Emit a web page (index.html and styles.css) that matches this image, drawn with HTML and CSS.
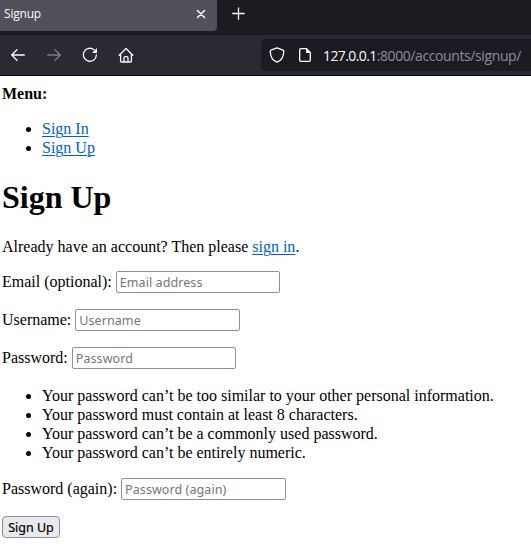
FILE: index.html
```html
<!DOCTYPE html>
<html lang="en">
<head>
<meta charset="utf-8">
<title>Signup</title>
<link rel="stylesheet" href="styles.css">
</head>
<body>
<header class="browser">
  <div class="tabs">
    <div class="tab">
      <span class="tab-title">Signup</span>
      <svg class="close" width="10" height="10" viewBox="0 0 10 10"><path d="M1.5 1.5l7 7M8.5 1.5l-7 7"/></svg>
    </div>
    <svg class="new-tab" width="14" height="14" viewBox="0 0 14 14"><path d="M6.5 .8v11.4M.8 6.5h11.4"/></svg>
  </div>
  <div class="toolbar">
    <div class="buttons">
      <svg width="16" height="16" viewBox="0 0 16 16"><path d="M14.3 8H2M7 2.7L1.7 8 7 13.3"/></svg>
      <svg class="disabled" width="16" height="16" viewBox="0 0 16 16"><path d="M1.7 8H14M9 2.7L14.3 8 9 13.3"/></svg>
      <svg width="16" height="16" viewBox="0 0 16 16"><path d="M12 2.7A6.5 6.5 0 1 0 14.4 8"/><path class="solid" d="M15 1v5H10z"/></svg>
      <svg width="16" height="16" viewBox="0 0 16 16"><path d="M1.2 8.2L8 1.5l6.8 6.7M2.6 7v7.2q0 .8.8.8h9.2q.8 0 .8-.8V7M6 15v-4q0-1.3 1.3-1.3h1.4q1.3 0 1.3 1.3v4"/></svg>
    </div>
    <div class="address">
      <svg width="16" height="16" viewBox="0 0 16 16"><path d="M8 .8L14 3.1q.8.3.8 1.1C14.6 9.2 12.3 13.7 8 15.2 3.7 13.7 1.4 9.2 1.2 4.2q0-.8.8-1.1z"/></svg>
      <svg class="page-icon" width="14" height="16" viewBox="0 0 14 16"><path d="M8.5 1.7H3Q1.7 1.7 1.7 3v10q0 1.3 1.3 1.3h8q1.3 0 1.3-1.3V5.5z"/><path class="solid" d="M8 1.2l4.8 4.8H8z"/></svg>
      <span class="url"><span class="host">127.0.0.1</span>:8000/accounts/signup/</span>
    </div>
  </div>
</header>
<main>
  <div><strong>Menu:</strong></div>
  <ul>
    <li><a href="#">Sign In</a></li>
    <li><a href="#">Sign Up</a></li>
  </ul>
  <h1>Sign Up</h1>
  <p>Already have an account? Then please <a href="#">sign in</a>.</p>
  <form>
    <p class="field"><label for="email">Email (optional):</label><input class="narrow" id="email" type="email" placeholder="Email address"></p>
    <p class="field"><label for="username">Username:</label><input id="username" type="text" placeholder="Username"></p>
    <p class="field"><label for="password1">Password:</label><input class="narrow" id="password1" type="password" placeholder="Password"></p>
    <ul class="rules">
      <li>Your password can’t be too similar to your other personal information.</li>
      <li>Your password must contain at least 8 characters.</li>
      <li>Your password can’t be a commonly used password.</li>
      <li>Your password can’t be entirely numeric.</li>
    </ul>
    <p class="field"><label for="password2">Password (again):</label><input id="password2" type="password" placeholder="Password (again)"></p>
    <button type="button">Sign Up</button>
  </form>
</main>
</body>
</html>
```
FILE: styles.css
```css
* { box-sizing: border-box; }
body {
  margin: 0;
  height: 544px;
  overflow: hidden;
  background: #fff;
  color: #000;
  font: 16px/19px "Liberation Serif", "Times New Roman", serif;
}
svg { display: block; flex: none; fill: none; stroke: #fbfbfe; stroke-width: 1.3; stroke-linecap: round; stroke-linejoin: round; }
.solid { fill: #fbfbfe; stroke: none; }

.browser { height: 76px; background: #2b2a33; border-bottom: 1px solid #0c0c0d; font-family: "Open Sans", sans-serif; }
.tabs { display: flex; height: 35px; background: #1c1b22; }
.tab {
  display: flex;
  align-items: center;
  justify-content: space-between;
  width: 217px;
  height: 31px;
  padding: 0 11px 4px 4px;
  border-radius: 0 0 4px 0;
  background: #52505b;
}
.tab-title { color: #fbfbfe; font-size: 12px; letter-spacing: -0.2px; }
.close { stroke-width: 1.5; }
.new-tab { margin: 7px 0 0 15px; }
.toolbar { display: flex; height: 40px; padding-top: 4px; }
.buttons { display: flex; flex: none; gap: 20px; width: 261px; padding: 8px 0 0 10px; }
.disabled { opacity: .4; }
.address {
  display: flex;
  flex: 1;
  align-items: center;
  min-width: 0;
  height: 32px;
  padding-left: 8px;
  border-radius: 4px 0 0 4px;
  background: #1c1b22;
}
.page-icon { margin-left: 13px; }
.url { margin: 1px 0 0 11px; color: #8f8f9a; font-size: 14px; letter-spacing: -0.4px; white-space: nowrap; }
.host { color: #fbfbfe; letter-spacing: -0.6px; }

main { padding: 8px 2px; }
a { color: #0061c9; text-decoration: underline; text-underline-offset: 2px; text-decoration-thickness: 1px; }
ul { margin: 16px 0; padding-left: 40px; }
h1 { margin: 22px 0 21px; font-size: 32px; line-height: 37px; }
p { margin: 16px 0; }
form { margin-top: -1px; }
.rules { margin: 17px 0 16px; }
.field { display: flex; align-items: center; gap: 4px; height: 22px; }
label { margin-top: -1px; }
input {
  width: 165px;
  height: 22px;
  padding: 1px 3px;
  border: 1px solid #8f8f9d;
  border-radius: 2px;
  background: #fff;
  font: 12.5px "Noto Sans", sans-serif;
  letter-spacing: 0.08px;
}
.narrow { width: 164px; }
input::placeholder { color: #757575; }
button {
  display: block;
  width: 58px;
  height: 22px;
  padding: 1px 0 0;
  border: 1px solid #8f8f9d;
  border-radius: 4px;
  background: #e9e9ed;
  color: #000;
  font: 12.5px "Noto Sans", sans-serif;
  -webkit-text-stroke: 0.2px #000;
}
```
